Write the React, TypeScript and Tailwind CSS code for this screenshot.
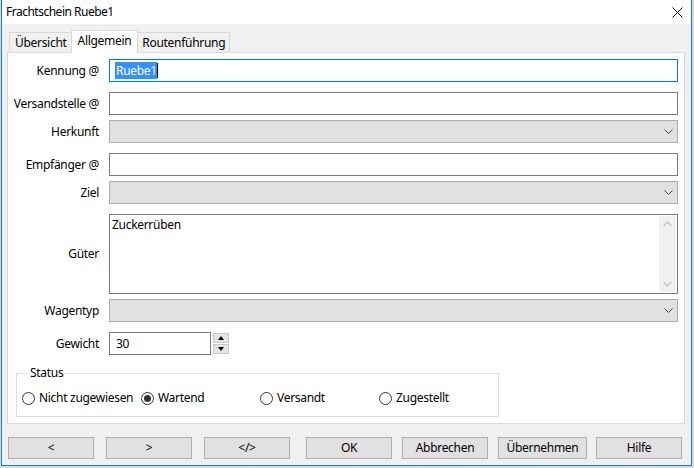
import React from "react";

const Chevron = () => (
  <svg width="9" height="6" viewBox="0 0 9 6" className="shrink-0">
    <polyline points="0.5,0.5 4.5,4.5 8.5,0.5" fill="none" stroke="#444" strokeWidth="1" />
  </svg>
);

const Label = ({ children }: { children: React.ReactNode }) => (
  <div className="w-[92px] shrink-0 text-right pr-px">{children}</div>
);

const TextInput = ({ children, focused }: { children?: React.ReactNode; focused?: boolean }) => (
  <div
    className={
      "ml-[9px] flex-1 h-[23px] bg-white border flex items-center pl-[5px] " +
      (focused ? "border-[#0078d7]" : "border-[#7a7a7a]")
    }
  >
    {children}
  </div>
);

const Combo = () => (
  <div className="ml-[9px] flex-1 h-[23px] bg-[#e1e1e1] border border-[#adadad] flex items-center justify-end pr-[4px]">
    <Chevron />
  </div>
);

const Radio = ({ label, checked }: { label: string; checked?: boolean }) => (
  <div className="w-[119px] flex items-center">
    <div className="w-[13px] h-[13px] rounded-full border border-[#333] bg-white flex items-center justify-center shrink-0">
      {checked && <div className="w-[7px] h-[7px] rounded-full bg-[#333]" />}
    </div>
    <span className="ml-[4px]">{label}</span>
  </div>
);

const Btn = ({ children, className }: { children: React.ReactNode; className?: string }) => (
  <div
    className={
      "w-[86px] h-[22px] bg-[#e1e1e1] border border-[#adadad] flex items-center justify-center " + (className || "")
    }
  >
    {children}
  </div>
);

export default function App() {
  return (
    <div
      className="w-[694px] h-[468px] bg-[#d6d9de] overflow-hidden text-[12px] tracking-[-0.3px] leading-[16px] text-black"
      style={{ fontFamily: '"Noto Sans", "Segoe UI", sans-serif' }}
    >
      <div className="ml-px w-[691px] h-[466px] border-l border-r border-b border-[#1a7ad0] bg-[#f0f0f0] flex flex-col">
        {/* title bar */}
        <div className="h-[24px] bg-white flex items-center pl-[4px] pr-[8px] justify-between">
          <span className="tracking-[-0.5px]">Frachtschein Ruebe1</span>
          <svg width="11" height="11" viewBox="0 0 11 11">
            <path d="M0.5 0.5 L10.5 10.5 M10.5 0.5 L0.5 10.5" stroke="#000" strokeWidth="1" />
          </svg>
        </div>

        {/* tabs */}
        <div className="h-[28px] flex items-end pl-[7px]">
          <div className="h-[20px] pl-[5px] pr-[4px] border-l border-t border-[#d9d9d9] bg-[#f0f0f0] flex items-center">
            Übersicht
          </div>
          <div className="relative z-10 -mb-px h-[23px] px-[6px] border-l border-t border-r border-[#d9d9d9] bg-white flex items-start pt-[2px]">
            Allgemein
          </div>
          <div className="h-[20px] px-[4px] border-t border-r border-[#d9d9d9] bg-[#f0f0f0] flex items-center">
            Routenführung
          </div>
        </div>

        {/* panel */}
        <div className="ml-[5px] w-[678px] h-[372px] border border-[#d9d9d9] bg-white pt-[6px] pr-[6px] flex flex-col">
          <div className="flex items-center">
            <Label>Kennung @</Label>
            <TextInput focused>
              <span className="bg-[#3390ff] text-white leading-[17px] pl-px">Ruebe1</span>
              <span className="w-px h-[15px] bg-black" />
            </TextInput>
          </div>
          <div className="flex items-center mt-[10px]">
            <Label>Versandstelle @</Label>
            <TextInput />
          </div>
          <div className="flex items-center mt-[5px]">
            <Label>Herkunft</Label>
            <Combo />
          </div>
          <div className="flex items-center mt-[10px]">
            <Label>Empfänger @</Label>
            <TextInput />
          </div>
          <div className="flex items-center mt-[5px]">
            <Label>Ziel</Label>
            <Combo />
          </div>
          <div className="flex items-center mt-[10px]">
            <Label>Güter</Label>
            <div className="ml-[9px] flex-1 h-[80px] bg-white border border-[#7a7a7a] flex">
              <div className="flex-1 pl-[2px] pt-[2px]">Zuckerrüben</div>
              <div className="w-[17px] mr-px my-px bg-[#f0f0f0] flex flex-col items-center justify-between py-[5px]">
                <svg width="9" height="6" viewBox="0 0 9 6">
                  <polyline points="0.5,5 4.5,1 8.5,5" fill="none" stroke="#c2c2c2" strokeWidth="1.4" />
                </svg>
                <svg width="9" height="6" viewBox="0 0 9 6">
                  <polyline points="0.5,1 4.5,5 8.5,1" fill="none" stroke="#c2c2c2" strokeWidth="1.4" />
                </svg>
              </div>
            </div>
          </div>
          <div className="flex items-center mt-[5px]">
            <Label>Wagentyp</Label>
            <Combo />
          </div>
          <div className="flex items-center mt-[10px]">
            <Label>Gewicht</Label>
            <div className="ml-[9px] w-[102px] h-[23px] bg-white border border-[#7a7a7a] flex items-center pl-[6px]">
              30
            </div>
            <div className="ml-[2px] w-[16px] h-[21px] flex flex-col justify-between">
              <div className="h-[10px] bg-[#e5e5e5] border border-[#c8c8c8] flex items-center justify-center">
                <svg width="6" height="4" viewBox="0 0 6 4">
                  <polygon points="0,4 3,0 6,4" fill="#000" />
                </svg>
              </div>
              <div className="h-[10px] bg-[#e5e5e5] border border-[#c8c8c8] flex items-center justify-center">
                <svg width="6" height="4" viewBox="0 0 6 4">
                  <polygon points="0,0 6,0 3,4" fill="#000" />
                </svg>
              </div>
            </div>
          </div>

          <fieldset className="ml-[8px] mt-[10px] w-[482px] h-[52px] border border-[#dcdcdc] pl-[5px]">
            <legend className="ml-[6px] px-[2px] leading-[16px]">Status</legend>
            <div className="flex items-center mt-[9px]">
              <Radio label="Nicht zugewiesen" />
              <Radio label="Wartend" checked />
              <Radio label="Versandt" />
              <Radio label="Zugestellt" />
            </div>
          </fieldset>
        </div>

        {/* buttons */}
        <div className="flex mt-[13px] pl-[6px]">
          <Btn>&lt;</Btn>
          <Btn className="ml-[12px]">&gt;</Btn>
          <Btn className="ml-[12px]">&lt;/&gt;</Btn>
          <Btn className="ml-[16px]">OK</Btn>
          <Btn className="ml-[10px]">Abbrechen</Btn>
          <Btn className="ml-[10px] w-[89px]">Übernehmen</Btn>
          <Btn className="ml-[9px]">Hilfe</Btn>
        </div>
      </div>
    </div>
  );
}
